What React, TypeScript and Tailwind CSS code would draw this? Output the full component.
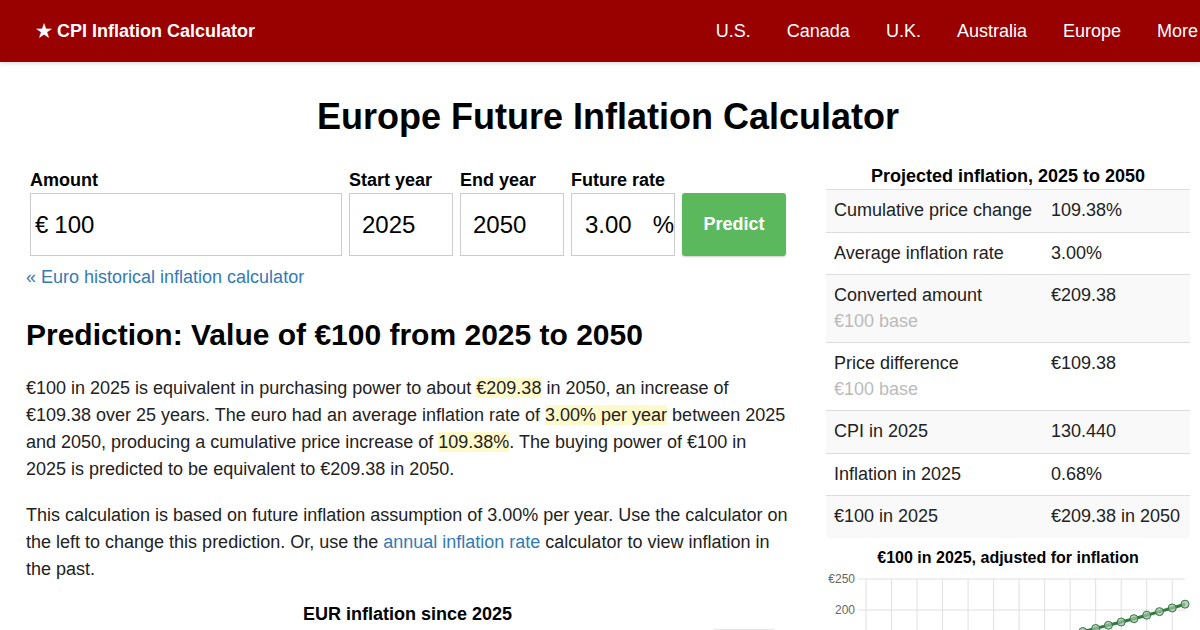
import React from 'react';

const navItems = ['U.S.', 'Canada', 'U.K.', 'Australia', 'Europe', 'More'];

const rows = [
  { label: 'Cumulative price change', value: '109.38%' },
  { label: 'Average inflation rate', value: '3.00%' },
  { label: 'Converted amount', sub: '€100 base', value: '€209.38' },
  { label: 'Price difference', sub: '€100 base', value: '€109.38' },
  { label: 'CPI in 2025', value: '130.440' },
  { label: 'Inflation in 2025', value: '0.68%' },
  { label: '€100 in 2025', value: '€209.38 in 2050' },
];

function Hl({ children }: { children: React.ReactNode }) {
  return <span className="bg-[#fffacc]">{children}</span>;
}

function Chart() {
  // y for a value: 200 sits at 41, 0.62px per euro
  const y = (v: number) => 41 - (v - 200) * 0.62;
  const x = (n: number) => 40 + n * 12.76;
  const points = Array.from({ length: 26 }, (_, n) => ({ x: x(n), y: y(100 * Math.pow(1.03, n)) }));
  const path = points.map((p, i) => `${i === 0 ? 'M' : 'L'}${p.x.toFixed(1)},${p.y.toFixed(1)}`).join(' ');

  return (
    <svg width="364" height="120" className="block">
      {Array.from({ length: 13 }, (_, k) => (
        <line key={k} x1={40 + k * 25.52} x2={40 + k * 25.52} y1={10} y2={120} stroke="#e0e0e0" strokeWidth={1} />
      ))}
      {[10, 41, 72, 103].map((gy) => (
        <line key={gy} x1={32} x2={359} y1={gy} y2={gy} stroke="#e0e0e0" strokeWidth={1} />
      ))}
      <text x={29} y={14} textAnchor="end" fontSize="12" fill="#666" fontFamily="Liberation Sans, Arial, sans-serif">€250</text>
      <text x={29} y={45} textAnchor="end" fontSize="12" fill="#666" fontFamily="Liberation Sans, Arial, sans-serif">200</text>
      <text x={29} y={76} textAnchor="end" fontSize="12" fill="#666" fontFamily="Liberation Sans, Arial, sans-serif">150</text>
      <path d={path} fill="none" stroke="#2f7a3e" strokeWidth={3} />
      {points.map((p, i) => (
        <circle key={i} cx={p.x} cy={p.y} r={4} fill="#a3bfa6" stroke="#2f7a3e" strokeWidth={1} fillOpacity={0.75} />
      ))}
    </svg>
  );
}

export default function App() {
  return (
    <div className="w-[1200px] h-[630px] overflow-hidden bg-white text-[#222] font-['Liberation_Sans',Arial,sans-serif]">
      {/* Top bar */}
      <header className="h-[62px] bg-[#990000] flex items-center pl-[36px] shadow-[0_2px_4px_rgba(0,0,0,0.12)] relative z-10">
        <div className="text-white font-bold text-[18px]">★ CPI Inflation Calculator</div>
        <nav className="ml-auto -mr-[16px] flex">
          {navItems.map((item) => (
            <a key={item} className="px-[18px] text-white text-[18px]">
              {item}
            </a>
          ))}
        </nav>
      </header>

      <h1 className="mt-[34px] pl-[26px] pr-[10px] text-center font-bold text-[36px] leading-[41px] text-black">
        Europe Future Inflation Calculator
      </h1>

      <div className="flex pl-[26px] mt-[27px]">
        {/* Left column */}
        <div className="w-[763px]">
          <div className="flex gap-[7px] pl-[4px] pt-[6px]">
            <div className="w-[312px]">
              <div className="font-bold text-[18px] leading-[20px] mb-[3px] text-black">Amount</div>
              <div className="h-[63px] border border-[#ccc] flex items-center pl-[4px] text-[24px] text-black">
                <span>€</span>
                <span className="ml-[6px]">100</span>
              </div>
            </div>
            <div className="w-[104px]">
              <div className="font-bold text-[18px] leading-[20px] mb-[3px] text-black">Start year</div>
              <div className="h-[63px] border border-[#ccc] flex items-center pl-[12px] text-[24px] text-black">2025</div>
            </div>
            <div className="w-[104px]">
              <div className="font-bold text-[18px] leading-[20px] mb-[3px] text-black">End year</div>
              <div className="h-[63px] border border-[#ccc] flex items-center pl-[12px] text-[24px] text-black">2050</div>
            </div>
            <div className="w-[104px]">
              <div className="font-bold text-[18px] leading-[20px] mb-[3px] text-black whitespace-nowrap">Future rate</div>
              <div className="h-[63px] border border-[#ccc] flex items-center pl-[13px] text-[24px] text-black">
                <span>3.00</span>
                <span className="ml-auto">%</span>
              </div>
            </div>
            <div className="w-[104px] pt-[23px]">
              <button className="w-full h-[63px] rounded-[3px] bg-[#5cb85c] text-white font-bold text-[18px] shadow-[0_1px_2px_rgba(0,0,0,0.2)]">
                Predict
              </button>
            </div>
          </div>

          <a className="block mt-[10px] text-[18px] leading-[22px] text-[#337ab7]">« Euro historical inflation calculator</a>

          <h2 className="mt-[29px] font-bold text-[30px] leading-[36px] text-black">
            Prediction: Value of €100 from 2025 to 2050
          </h2>

          <p className="mt-[22px] text-[18px] leading-[27px]">
            €100 in 2025 is equivalent in purchasing power to about <Hl>€209.38</Hl> in 2050, an increase of €109.38
            over 25 years. The euro had an average inflation rate of <Hl>3.00% per year</Hl> between 2025 and 2050,
            producing a cumulative price increase of <Hl>109.38%</Hl>. The buying power of €100 in 2025 is predicted to be
            equivalent to €209.38 in 2050.
          </p>

          <p className="mt-[19px] text-[18px] leading-[27px]">
            This calculation is based on future inflation assumption of 3.00% per year. Use the calculator on the left to
            change this prediction. Or, use the <a className="text-[#337ab7]">annual inflation rate</a> calculator to view
            inflation in the past.
          </p>

          <div className="mt-[20px] text-center font-bold text-[18px] leading-[22px] text-black">
            EUR inflation since 2025
          </div>
          <div className="flex justify-end pr-[15px] mt-[4px]">
            <div className="w-[60px] h-[20px] border-t border-[#e5e5e5]" />
          </div>
        </div>

        {/* Right column */}
        <div className="w-[364px] ml-[37px]">
          <div className="text-center font-bold text-[18px] leading-[24px] mb-[1px] text-black">
            Projected inflation, 2025 to 2050
          </div>
          <div>
            {rows.map((r, i) => (
              <div
                key={r.label}
                className={`flex border-t border-[#ddd] text-[18px] leading-[25.5px] ${i % 2 === 0 ? 'bg-[#f9f9f9]' : 'bg-white'}`}
              >
                <div className="w-[217px] px-[8px] py-[8px]">
                  <div>{r.label}</div>
                  {r.sub && <div className="text-[#bbb]">{r.sub}</div>}
                </div>
                <div className="flex-1 px-[8px] py-[8px]">{r.value}</div>
              </div>
            ))}
          </div>
          <div className="mt-[9px] text-center font-bold text-[16px] leading-[22px] text-black">
            €100 in 2025, adjusted for inflation
          </div>
          <Chart />
        </div>
      </div>
    </div>
  );
}
